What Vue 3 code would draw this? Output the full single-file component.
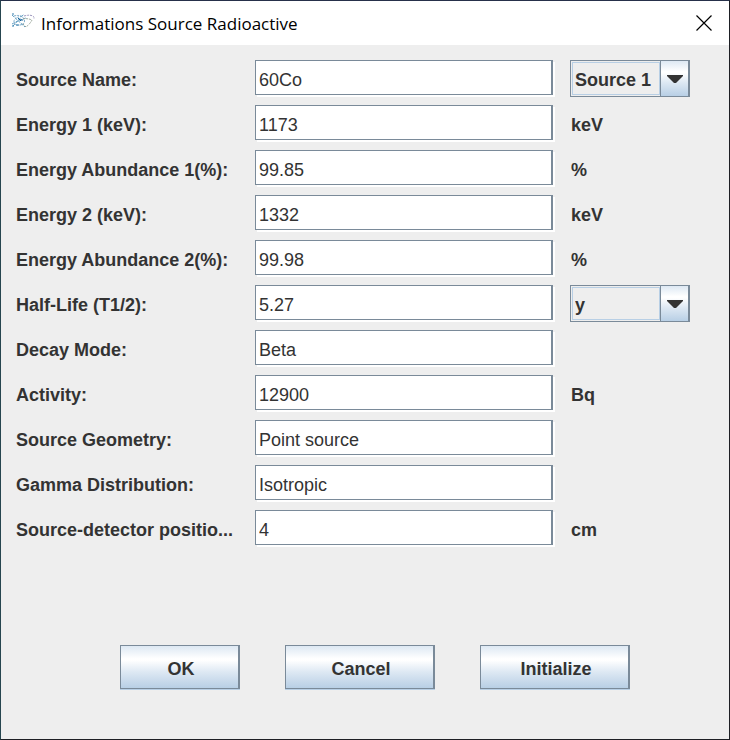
<script setup>
import { ref } from 'vue'

const fields = ref([
  { id: 'name', label: 'Source Name:', value: '60Co', choice: 'Source 1', options: ['Source 1', 'Source 2', 'Source 3'], name: 'Source' },
  { id: 'energy1', label: 'Energy 1 (keV):', value: '1173', unit: 'keV' },
  { id: 'abundance1', label: 'Energy Abundance 1(%):', value: '99.85', unit: '%' },
  { id: 'energy2', label: 'Energy 2 (keV):', value: '1332', unit: 'keV' },
  { id: 'abundance2', label: 'Energy Abundance 2(%):', value: '99.98', unit: '%' },
  { id: 'halflife', label: 'Half-Life (T1/2):', value: '5.27', choice: 'y', options: ['y', 'd', 'h', 'min', 's'], name: 'Half-life unit' },
  { id: 'decay', label: 'Decay Mode:', value: 'Beta' },
  { id: 'activity', label: 'Activity:', value: '12900', unit: 'Bq' },
  { id: 'geometry', label: 'Source Geometry:', value: 'Point source' },
  { id: 'distribution', label: 'Gamma Distribution:', value: 'Isotropic' },
  { id: 'position', label: 'Source-detector positio...', value: '4', unit: 'cm' },
])
</script>

<template>
  <form class="dialog" @submit.prevent>
    <header class="titlebar">
      <svg class="logo" viewBox="0 0 24 16" width="24" height="16" fill="none" aria-hidden="true">
        <path d="M1 2 L14 14 M2 13 L13 1 M1 11 Q8 7 15 5" stroke="#5f9dc2" stroke-dasharray="3 1" />
        <path d="M3 3 Q10 1 13 6 Q15 11 9 12 Q3 13 3 8 Q4 4 12 3" stroke="#79a9c9" stroke-dasharray="2 1" />
        <path d="M13 3 Q20 1 23 4 V6" stroke="#9b95bd" stroke-dasharray="2 1" />
        <path d="M12 6 Q16 5 21 7 Q19 11 15 14 L11 10" stroke="#9aa79b" stroke-dasharray="2 1" />
        <path d="M7 5 L10 8 M9 7 H12" stroke="#19639b" />
        <path d="M1 13h2M5 12h3M1 1h2" stroke="#347fae" />
      </svg>
      <h1>Informations Source Radioactive</h1>
      <button type="button" class="close" aria-label="Close">
        <svg viewBox="0 0 16 16" width="16" height="16" aria-hidden="true">
          <path d="M.5 .5 L15.5 15.5 M15.5 .5 L.5 15.5" stroke="#000" stroke-width="1.2" />
        </svg>
      </button>
    </header>

    <main class="fields">
      <div v-for="field in fields" :key="field.id" class="row">
        <label :for="field.id">{{ field.label }}</label>
        <input :id="field.id" v-model="field.value" type="text" />
        <div v-if="field.options" class="combo">
          <select v-model="field.choice" :aria-label="field.name">
            <option v-for="option in field.options" :key="option">{{ option }}</option>
          </select>
          <span class="arrow">
            <svg viewBox="0 0 16 8" width="16" height="8" aria-hidden="true">
              <path d="M0 0 H16 V1 L9 8 H7 L0 1 Z" fill="#333" />
            </svg>
          </span>
        </div>
        <span v-else class="unit">{{ field.unit }}</span>
      </div>
    </main>

    <footer class="actions">
      <button type="submit" class="ok">OK</button>
      <button type="button">Cancel</button>
      <button type="button">Initialize</button>
    </footer>
  </form>
</template>

<style>
body {
  margin: 0;
  background: #eee;
}
</style>

<style scoped>
.dialog {
  display: flex;
  flex-direction: column;
  box-sizing: border-box;
  min-height: 100vh;
  border: 1px solid #1d1f24;
  border-top-color: #26304a;
  border-left-color: #26454f;
  background: #eee;
  color: #333;
  font: bold 18px/20px "Liberation Sans", Arial, sans-serif;
}

.titlebar {
  display: flex;
  align-items: center;
  box-sizing: border-box;
  height: 44px;
  padding: 0 17px 0 10px;
  background: #fff;
}

.logo {
  margin-bottom: 4px;
}

h1 {
  flex: 1;
  margin: 0 0 0 6px;
  padding-top: 2px;
  color: #000;
  font: 400 17px/24px "Open Sans", "Noto Sans", sans-serif;
}

.close {
  display: flex;
  padding: 0;
  border: 0;
  background: none;
}

.fields {
  display: grid;
  gap: 8px;
  padding: 15px 39px 0 15px;
}

.row {
  display: grid;
  grid-template-columns: 239px minmax(0, 1fr) 120px;
  height: 37px;
}

label,
.unit {
  padding-top: 3px;
  line-height: 34px;
  white-space: nowrap;
}

.unit {
  padding-left: 1px;
}

input {
  box-sizing: border-box;
  min-width: 0;
  height: 35px;
  margin-right: 17px;
  padding: 5px 3px 0;
  border: solid #7a8a99;
  border-width: 1px 2px 1px 1px;
  border-radius: 0;
  outline: 0;
  background: #fff;
  box-shadow: 2px 2px 0 #fff;
  color: #333;
  font: 400 18px/20px "Liberation Sans", Arial, sans-serif;
}

.combo {
  display: grid;
  grid-template-columns: minmax(0, 1fr) 28px;
  box-sizing: border-box;
  border: solid #7a8a99;
  border-width: 1px 2px 1px 1px;
}

.combo::after {
  content: "";
  grid-area: 1 / 1;
  margin: 1px 0 1px 1px;
  border: 1px solid #b8cfe5;
  pointer-events: none;
}

select {
  grid-area: 1 / 1 / 2 / 3;
  box-sizing: border-box;
  width: 100%;
  margin: 0;
  padding: 3px 30px 0 4px;
  border: 0;
  border-radius: 0;
  outline: 0;
  appearance: none;
  background: #eee;
  color: #333;
  font: inherit;
}

.arrow {
  grid-area: 1 / 2;
  display: flex;
  align-items: center;
  justify-content: center;
  border-left: 1px solid #7a8a99;
  pointer-events: none;
}

.arrow,
.actions button {
  background: linear-gradient(#dde8f3, #fff 30%, #fff 34%, #dde8f3 62%, #b8cfe5);
}

.actions {
  display: flex;
  justify-content: center;
  gap: 45px;
  margin: 98px 0 50px;
  padding-left: 20px;
}

.actions button {
  box-sizing: border-box;
  width: 150px;
  height: 44px;
  padding: 3px 0 0 3px;
  border: solid #7a8a99;
  border-width: 1px 2px 1px 1px;
  border-radius: 0;
  box-shadow: 0 1px #b8cfe5;
  color: #333;
  font: inherit;
}

.actions .ok {
  width: 120px;
}
</style>
